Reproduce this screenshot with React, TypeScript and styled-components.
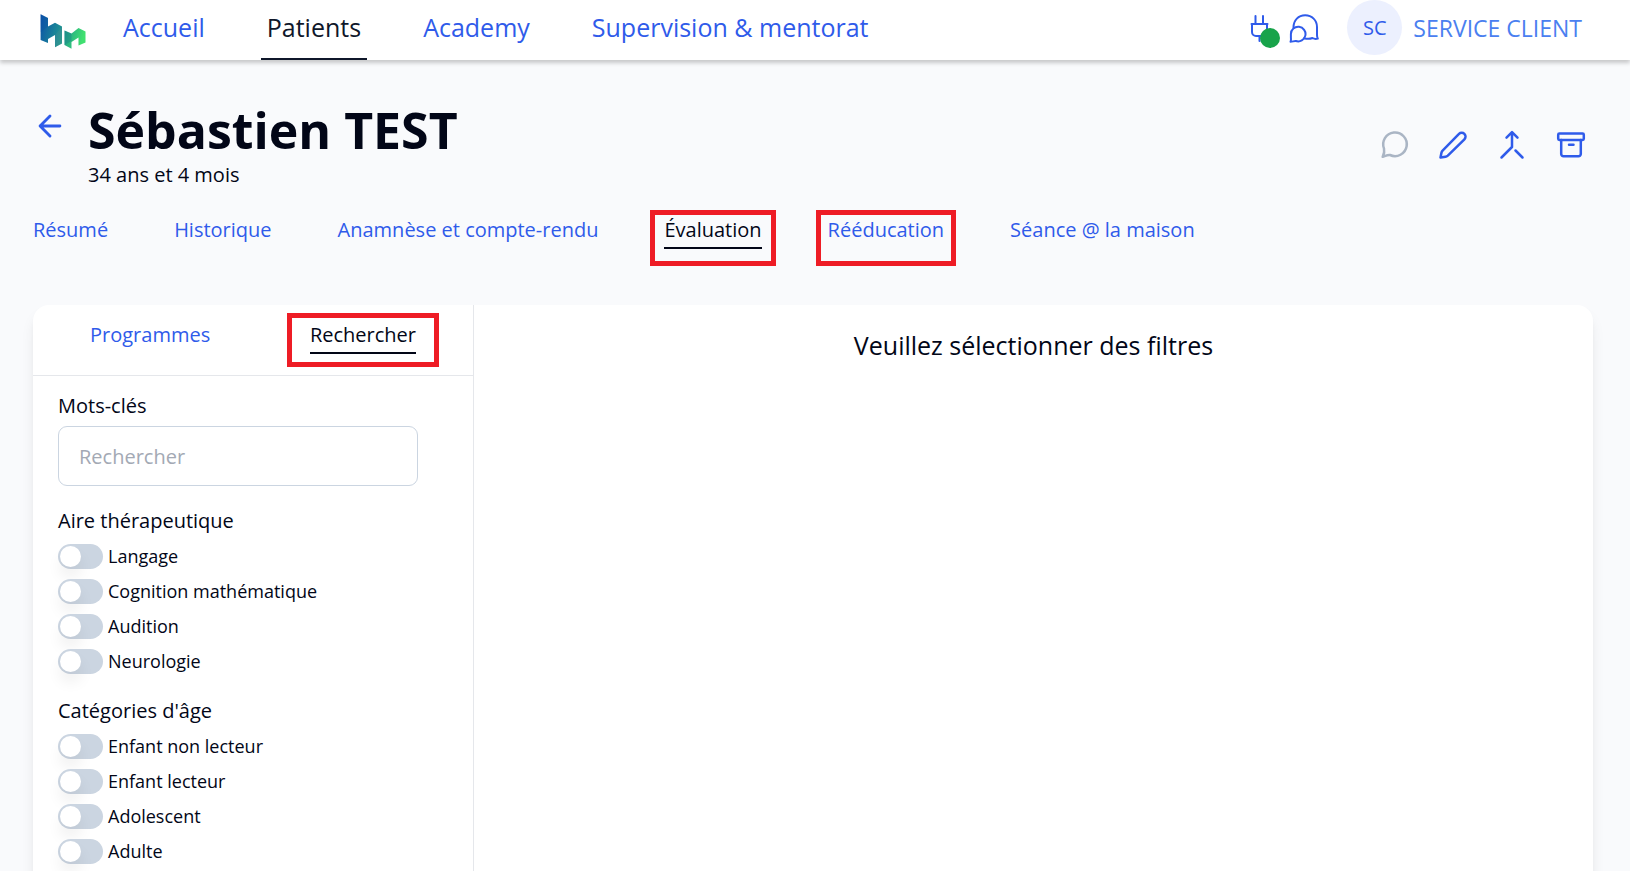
import React from 'react';
import styled, { createGlobalStyle, css } from 'styled-components';

const color = {
  link: '#2f5bea',
  linkSoft: '#4a80f0',
  ink: '#020617',
  page: '#f9fafc',
  line: '#e5e7eb',
  control: '#cbd5e1',
  mark: '#ee1c25',
};

const GlobalStyle = createGlobalStyle`
  *, *::before, *::after { box-sizing: border-box; }
  body {
    margin: 0;
    background: ${color.page};
    color: ${color.ink};
    font-family: "Open Sans", "Noto Sans", sans-serif;
    font-size: 20px;
    line-height: 30px;
  }
  a { text-decoration: none; }
`;

const Header = styled.header`
  position: relative;
  display: flex;
  align-items: flex-start;
  height: 60px;
  padding: 0 48px 0 40px;
  background: #fff;
  box-shadow: 0 3px 4px rgba(0, 0, 0, 0.2);
`;

const LogoLink = styled.a`
  display: flex;
  margin: 14px 31px 0 0;
`;

const MainNav = styled.nav`
  display: flex;
  gap: 50px;
`;

const NavLink = styled.a<{ $active?: boolean }>`
  height: 60px;
  padding: 0 6px 3px;
  border-bottom: 2px solid ${(p) => (p.$active ? '#0f172a' : 'transparent')};
  color: ${(p) => (p.$active ? '#0f172a' : color.link)};
  font-size: 25px;
  line-height: 55px;
  white-space: nowrap;
`;

const UserArea = styled.div`
  display: flex;
  align-items: center;
  height: 55px;
  margin-left: auto;
`;

const IconButton = styled.button<{ $muted?: boolean }>`
  position: relative;
  display: flex;
  padding: 0;
  border: 0;
  background: none;
  color: ${(p) => (p.$muted ? '#aab5c4' : color.link)};
  cursor: pointer;
`;

const StatusDot = styled.span`
  position: absolute;
  right: -11px;
  bottom: -5px;
  width: 20px;
  height: 20px;
  border-radius: 50%;
  background: #18a34a;
`;

const HeaderIcons = styled.div`
  display: flex;
  gap: 20px;
  margin-right: 28px;
`;

const Account = styled.a`
  display: flex;
  align-items: center;
  gap: 11px;
  color: ${color.linkSoft};
  font-size: 23px;
  white-space: nowrap;
`;

const Avatar = styled.span`
  width: 55px;
  height: 55px;
  border-radius: 50%;
  background: #ecf0fe;
  color: ${color.link};
  font-size: 20px;
  line-height: 55px;
  text-align: center;
`;

const Page = styled.main`
  padding: 40px 37px 32px 33px;
`;

const PatientHead = styled.section`
  display: flex;
  align-items: center;
  padding-right: 7px;
`;

const BackLink = styled.a`
  display: flex;
  align-self: flex-start;
  margin: 9px 21px 0 0;
  color: ${color.link};
`;

const PatientName = styled.h1`
  margin: 0;
  font-size: 50px;
  font-weight: 700;
  line-height: 60px;
`;

const PatientAge = styled.p`
  margin: 0;
`;

const Actions = styled.div`
  display: flex;
  gap: 29px;
  margin-left: auto;
`;

const PatientTabs = styled.nav`
  display: flex;
  gap: 66px;
  margin-top: 25px;
`;

type Mark = { top: number; side: number; bottom: number };

const TabLink = styled.a<{ $active?: boolean; $mark?: Mark }>`
  position: relative;
  padding-bottom: 2px;
  border-bottom: 2px solid ${(p) => (p.$active ? color.ink : 'transparent')};
  color: ${(p) => (p.$active ? color.ink : color.link)};
  white-space: nowrap;

  ${(p) =>
    p.$mark &&
    css`
      &::after {
        content: '';
        position: absolute;
        top: -${p.$mark.top}px;
        right: -${p.$mark.side}px;
        bottom: -${p.$mark.bottom}px;
        left: -${p.$mark.side}px;
        border: 5px solid ${color.mark};
        pointer-events: none;
      }
    `}
`;

const Panel = styled.section`
  display: flex;
  margin-top: 56px;
  border-radius: 16px;
  background: #fff;
  box-shadow: 0 10px 15px -3px rgba(0, 0, 0, 0.1), 0 4px 6px -4px rgba(0, 0, 0, 0.1);
`;

const Sidebar = styled.aside`
  flex: 0 0 441px;
  border-right: 1px solid ${color.line};
`;

const SidebarTabs = styled.nav`
  display: flex;
  justify-content: space-between;
  padding: 15px 57px 21px;
  border-bottom: 1px solid ${color.line};
`;

const Filters = styled.form`
  padding: 15px 55px 30px 25px;
`;

const Field = styled.label`
  display: block;
  margin-bottom: 20px;
`;

const TextInput = styled.input`
  display: block;
  width: 100%;
  height: 60px;
  margin-top: 5px;
  padding: 0 20px;
  border: 1px solid ${color.control};
  border-radius: 9px;
  background: #fff;
  color: ${color.ink};
  font: inherit;

  &::placeholder { color: #a3a9b4; opacity: 1; }
`;

const FilterGroup = styled.fieldset`
  margin: 0 0 22px;
  padding: 0;
  border: 0;
`;

const GroupTitle = styled.legend`
  margin-bottom: 8px;
  padding: 0;
`;

const ToggleList = styled.div`
  display: flex;
  flex-direction: column;
  gap: 10px;
`;

const ToggleLabel = styled.label`
  display: flex;
  gap: 5px;
  font-size: 18px;
  line-height: 25px;
`;

const Switch = styled.input`
  appearance: none;
  width: 45px;
  height: 25px;
  margin: 0;
  padding: 2px;
  border-radius: 13px;
  background: ${color.control};
  cursor: pointer;

  &::before {
    content: '';
    display: block;
    width: 21px;
    height: 21px;
    border-radius: 50%;
    background: #fff;
    box-shadow: 0 10px 15px rgba(0, 0, 0, 0.07);
  }
  &:checked { background: ${color.link}; }
  &:checked::before { margin-left: 20px; }
`;

const Results = styled.div`
  flex: 1;
  padding: 21px 20px;
  text-align: center;
`;

const EmptyMessage = styled.p`
  margin: 0;
  font-size: 25px;
  line-height: 38px;
`;

const stroke = {
  fill: 'none',
  stroke: 'currentColor',
  strokeWidth: 2,
  strokeLinecap: 'round',
  strokeLinejoin: 'round',
} as const;

const boldStroke = { ...stroke, strokeWidth: 2.5 };

const Logo = () => (
  <svg width="46" height="35" viewBox="0 0 46 35" aria-hidden="true">
    <defs>
      <linearGradient id="brand" x1="0" y1="0" x2="46" y2="12" gradientUnits="userSpaceOnUse">
        <stop offset="0" stopColor="#0a4ea8" />
        <stop offset="0.45" stopColor="#1c8a96" />
        <stop offset="0.62" stopColor="#22a389" />
        <stop offset="1" stopColor="#40e070" />
      </linearGradient>
    </defs>
    <path fill="url(#brand)" d="M.6.3 8 4v8.500l7-3.800 7 3.800v17l-7 3.800V21l-7 4v4L.6 26z" />
    <path fill="url(#brand)" d="M24.500 16.500 31.500 19.500l7-5.500 7 3.500v11l-7 3V23.500l-7 4.500v6.700L24.500 31z" />
    <path fill="#0a4ea8" opacity=".3" d="M.6.3 8 4v8.500L.6 18z" />
    <path fill="#0f6a8c" opacity=".3" d="m24.500 16.500 7 3v7.500l-7 4z" />
    <path fill="#5a8a94" opacity=".25" d="M15 21l7-8.500v17l-7 3.800z" />
  </svg>
);

const PlugIcon = () => (
  <svg width="19" height="30" viewBox="0 0 19 30" {...stroke}>
    <path d="M5.500 3v7M13 3v7M1.500 11h16M2 11v8a4 4 0 0 0 4 4h7a4 4 0 0 0 4-4v-8M9.500 23v5" />
  </svg>
);

const ChatsIcon = () => (
  <svg width="30" height="30" viewBox="0 0 30 30" {...stroke}>
    <path d="M4.500 14.500C4.500 7 9.500 2.300 16.200 2.300S28 7.200 28 14v8c0 1.600.3 2.600.8 3.600-2 .6-3.600.4-5.400-.6-2 .8-5 1.100-8.400.2" />
    <path d="M1.500 28.800c.5-1.300.6-2.300.4-3.800V21a7.300 7.300 0 1 1 5 7c-1.700-.2-3.400.8-5.400.8z" />
  </svg>
);

const ArrowLeftIcon = () => (
  <svg width="34" height="34" viewBox="0 0 24 24" {...stroke}>
    <path d="m12 19-7-7 7-7M19 12H5" />
  </svg>
);

const BubbleIcon = () => (
  <svg width="30" height="30" viewBox="0 0 30 30" {...boldStroke}>
    <path d="M3.700 26.800c1.600-3 2-5 1.300-8.200A11.800 11.800 0 1 1 11 25c-2.500-.3-4.800 1-7.300 1.800z" />
  </svg>
);

const PencilIcon = () => (
  <svg width="30" height="30" viewBox="0 0 30 30" {...boldStroke}>
    <path d="M2.500 27.500 3.400 23c.2-.9.600-1.700 1.200-2.300L21 3.900a3.800 3.800 0 0 1 5.400 5.400L9.800 25.600c-.7.600-1.400 1-2.300 1.100z" />
  </svg>
);

const MergeIcon = () => (
  <svg width="30" height="30" viewBox="0 0 30 30" {...boldStroke}>
    <path d="m9.500 7.700 5.500-5.500 5.500 5.500M15 2.500V17L4.500 27.500M18.500 20.500l7 7" />
  </svg>
);

const ArchiveIcon = () => (
  <svg width="30" height="30" viewBox="0 0 30 30" {...boldStroke}>
    <rect x="2.200" y="3.500" width="25.600" height="6.500" rx="1.200" />
    <path d="M5.200 10v14a2.300 2.300 0 0 0 2.300 2.300h15a2.300 2.300 0 0 0 2.300-2.300V10M13 14.800h4.500" />
  </svg>
);

const filterGroups = [
  { title: 'Aire thérapeutique', options: ['Langage', 'Cognition mathématique', 'Audition', 'Neurologie'] },
  { title: "Catégories d'âge", options: ['Enfant non lecteur', 'Enfant lecteur', 'Adolescent', 'Adulte'] },
];

export default function App() {
  return (
    <>
      <GlobalStyle />
      <Header>
        <LogoLink href="#" aria-label="Page principale"><Logo /></LogoLink>
        <MainNav>
          <NavLink href="#">Accueil</NavLink>
          <NavLink href="#" $active>Patients</NavLink>
          <NavLink href="#">Academy</NavLink>
          <NavLink href="#">Supervision &amp; mentorat</NavLink>
        </MainNav>
        <UserArea>
          <HeaderIcons>
            <IconButton type="button" aria-label="Connexion">
              <PlugIcon />
              <StatusDot />
            </IconButton>
            <IconButton type="button" aria-label="Messages"><ChatsIcon /></IconButton>
          </HeaderIcons>
          <Account href="#">
            <Avatar>SC</Avatar>
            SERVICE CLIENT
          </Account>
        </UserArea>
      </Header>

      <Page>
        <PatientHead>
          <BackLink href="#" aria-label="Retour"><ArrowLeftIcon /></BackLink>
          <div>
            <PatientName>Sébastien TEST</PatientName>
            <PatientAge>34 ans et 4 mois</PatientAge>
          </div>
          <Actions>
            <IconButton type="button" aria-label="Commenter" $muted><BubbleIcon /></IconButton>
            <IconButton type="button" aria-label="Modifier"><PencilIcon /></IconButton>
            <IconButton type="button" aria-label="Fusionner"><MergeIcon /></IconButton>
            <IconButton type="button" aria-label="Archiver"><ArchiveIcon /></IconButton>
          </Actions>
        </PatientHead>

        <PatientTabs>
          <TabLink href="#">Résumé</TabLink>
          <TabLink href="#">Historique</TabLink>
          <TabLink href="#">Anamnèse et compte-rendu</TabLink>
          <TabLink href="#" $active $mark={{ top: 5, side: 14, bottom: 19 }}>Évaluation</TabLink>
          <TabLink href="#" $mark={{ top: 5, side: 12, bottom: 19 }}>Rééducation</TabLink>
          <TabLink href="#">Séance @ la maison</TabLink>
        </PatientTabs>

        <Panel>
          <Sidebar>
            <SidebarTabs>
              <TabLink href="#">Programmes</TabLink>
              <TabLink href="#" $active $mark={{ top: 7, side: 23, bottom: 15 }}>Rechercher</TabLink>
            </SidebarTabs>
            <Filters>
              <Field>
                Mots-clés
                <TextInput type="text" placeholder="Rechercher" />
              </Field>
              {filterGroups.map((group) => (
                <FilterGroup key={group.title}>
                  <GroupTitle>{group.title}</GroupTitle>
                  <ToggleList>
                    {group.options.map((option) => (
                      <ToggleLabel key={option}>
                        <Switch type="checkbox" />
                        {option}
                      </ToggleLabel>
                    ))}
                  </ToggleList>
                </FilterGroup>
              ))}
            </Filters>
          </Sidebar>
          <Results>
            <EmptyMessage>Veuillez sélectionner des filtres</EmptyMessage>
          </Results>
        </Panel>
      </Page>
    </>
  );
}
